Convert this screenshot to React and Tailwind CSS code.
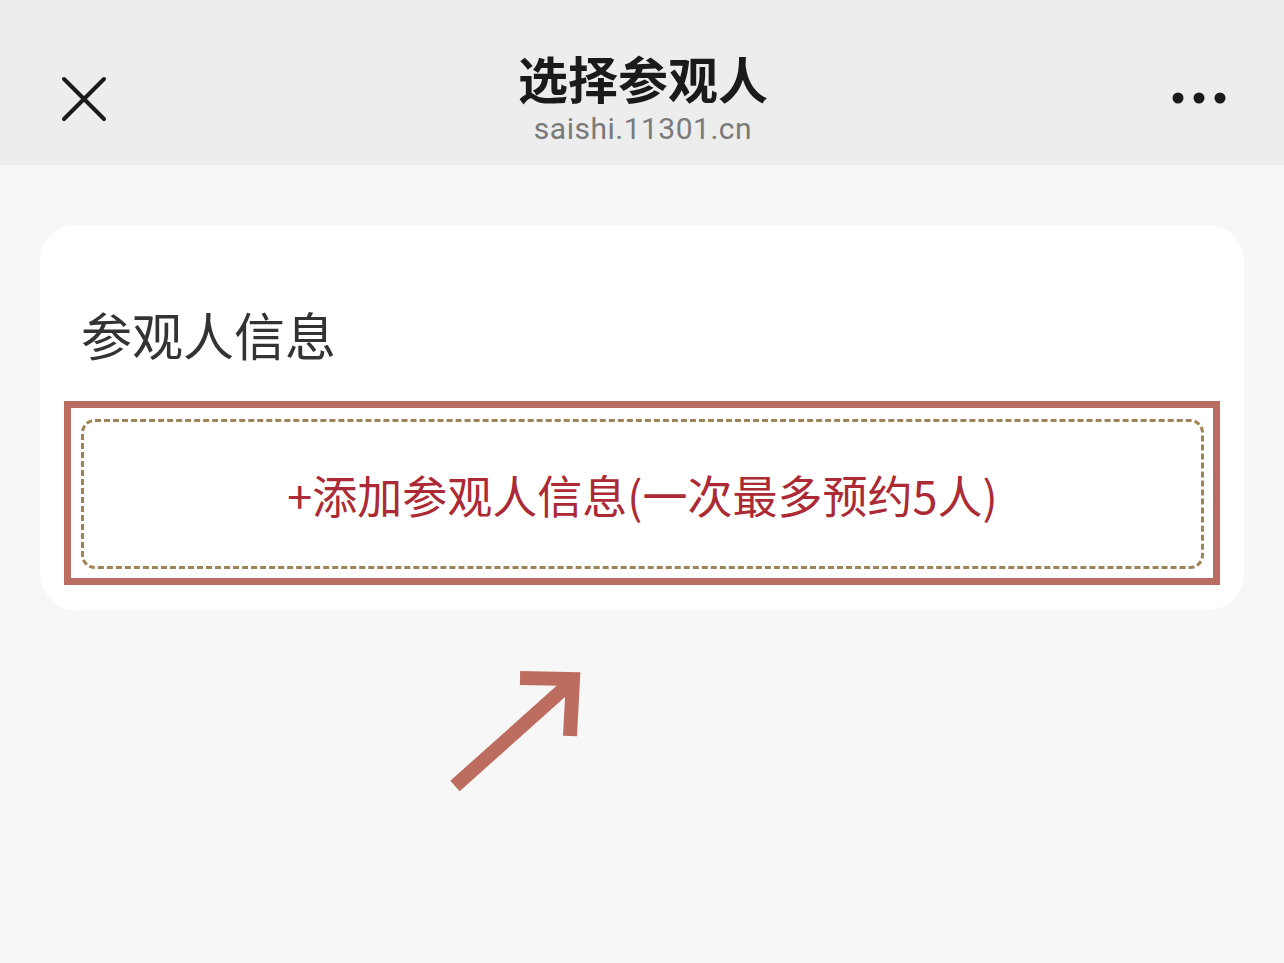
import React from 'react';

const cjk = {fontFamily: '"Noto Sans CJK SC", "Noto Sans", sans-serif'};

function CloseIcon() {
  return (
    <svg width="48" height="48" viewBox="0 0 48 48" className="shrink-0">
      <path d="M4 4 L44 44 M44 4 L4 44" stroke="#1a1a1a" strokeWidth="4" strokeLinecap="round" />
    </svg>
  );
}

function MoreIcon() {
  return (
    <svg width="54" height="14" viewBox="0 0 54 14" className="shrink-0">
      <circle cx="6" cy="7" r="5.5" fill="#1a1a1a" />
      <circle cx="27" cy="7" r="5.5" fill="#1a1a1a" />
      <circle cx="48" cy="7" r="5.5" fill="#1a1a1a" />
    </svg>
  );
}

function Arrow() {
  return (
    <svg width="150" height="130" viewBox="0 0 150 130">
      <path d="M10 116 L124 14" stroke="#bd6d5f" strokeWidth="14" />
      <path d="M75 8 L128 9 L125 66" stroke="#bd6d5f" strokeWidth="14" fill="none" />
    </svg>
  );
}

export default function App() {
  return (
    <div className="min-h-[963px] w-[1284px] bg-[#f7f7f7]" style={cjk}>
      <header className="flex h-[165px] items-center justify-between bg-[#ededed] pl-[60px] pr-[58px] pt-[24px]">
        <div className="w-[60px] pt-[9px]">
          <CloseIcon />
        </div>
        <div className="flex flex-col items-center pt-[4px]">
          <h1 className="text-[50px] font-semibold leading-[60px] text-[#1a1a1a]">选择参观人</h1>
          <p className="mt-[4px] text-[30px] leading-[36px] tracking-[0.5px] text-[#7a7a7a]" style={{fontFamily: 'Roboto, "Noto Sans", sans-serif'}}>
            saishi.11301.cn
          </p>
        </div>
        <div className="flex w-[60px] justify-end pt-[6px]">
          <MoreIcon />
        </div>
      </header>

      <main className="px-[40px] pt-[60px]">
        <section className="rounded-[36px] bg-white px-[24px] pb-[25px] pt-[80px]">
          <h2 className="pl-[17px] text-[51px] leading-[58px] text-[#333333]">参观人信息</h2>
          <div className="mt-[38px] border-[7px] border-[#b96c5f] bg-white pb-[9px] pl-[10px] pr-[9px] pt-[11px]">
            <div className="flex h-[150px] items-center justify-center rounded-[14px] border-[3px] border-dashed border-[#9f8458]">
              <span className="text-[45px] leading-none text-[#ab2a35]">+添加参观人信息(一次最多预约5人)</span>
            </div>
          </div>
        </section>

        <div className="pl-[405px] pt-[60px]">
          <Arrow />
        </div>
      </main>
    </div>
  );
}
